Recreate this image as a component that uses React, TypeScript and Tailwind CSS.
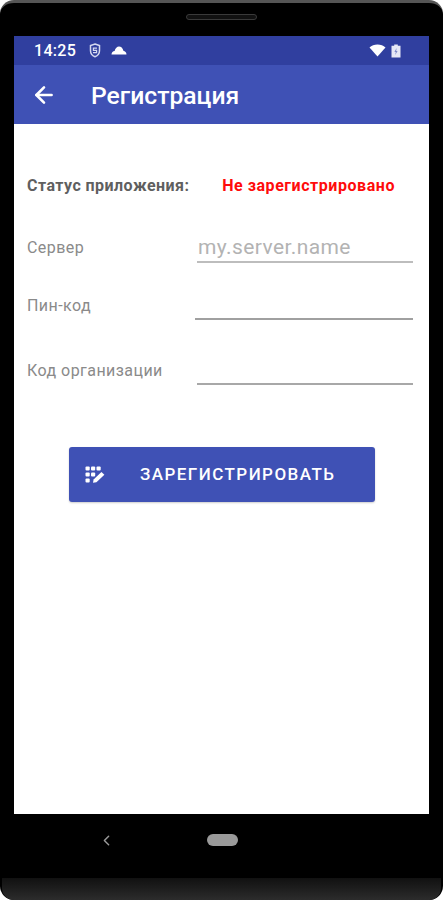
import { ArrowLeft, ChevronLeft } from 'lucide-react'

function ShieldIcon() {
  return (
    <svg width="12" height="15" viewBox="0 0 12 15" fill="none" className="ml-[13px]">
      <path d="M6 1 L10.5 2.6 V7.5 C10.5 10.5 8.4 12.9 6 13.8 C3.6 12.9 1.5 10.5 1.5 7.5 V2.6 Z" stroke="#d5d9f0" strokeWidth="1.5" />
      <path d="M8 5.2 H4.4 V7.3 H7.6 V9.6 H4" stroke="#d5d9f0" strokeWidth="1.2" />
    </svg>
  )
}

function CloudIcon() {
  return (
    <svg width="16" height="11" viewBox="0 0 16 11" className="ml-[10px]">
      <path d="M0.5 9.5 C0.5 7.5 2 6.2 3.6 6 C4.4 3.2 6 1.5 8 1.5 C10 1.5 11.8 3 12.4 5.8 C14 6 15.5 7.5 15.5 9.5 Z" fill="#ffffff" />
    </svg>
  )
}

function WifiIcon() {
  return (
    <svg width="17" height="13" viewBox="0 0 17 13">
      <path d="M0.5 3.4 C2.5 1.6 5.3 0.5 8.5 0.5 C11.7 0.5 14.5 1.6 16.5 3.4 L8.5 12.5 Z" fill="#ffffff" />
    </svg>
  )
}

function BatteryIcon() {
  return (
    <svg width="10" height="14" viewBox="0 0 10 14" className="ml-[5px]">
      <path d="M3.2 0.5 H6.8 V1.8 H9.5 V13.5 H0.5 V1.8 H3.2 Z" fill="#e6e8f6" />
      <path d="M5.6 4 L3.4 8 H4.8 L4.2 11 L6.6 7 H5.2 Z" fill="#7c88c8" />
    </svg>
  )
}

function DialpadEditIcon() {
  return (
    <svg width="20" height="18" viewBox="0 0 20 18" fill="#ffffff">
      <rect x="0.5" y="0.5" width="4.2" height="4" rx="1" />
      <rect x="6" y="0.5" width="4.2" height="4" rx="1" />
      <rect x="11.5" y="0.5" width="4.2" height="4" rx="1" />
      <rect x="0.5" y="6.5" width="4.2" height="4" rx="1" />
      <rect x="6" y="6.5" width="4.2" height="4" rx="1" />
      <rect x="0.5" y="12.5" width="4.2" height="4" rx="1" />
      <path d="M8 16.8 L8.6 13.6 L16.4 6 L19.4 8.8 L11.4 16.2 Z" />
    </svg>
  )
}

function FieldRow({ label, className, labelClass, inputClass, placeholder }: { label: string; className: string; labelClass: string; inputClass: string; placeholder?: string }) {
  return (
    <div className={`flex items-end justify-between ${className}`}>
      <span className={`text-[16px] leading-[20px] tracking-[0.45px] text-[#8a8a8a] ${labelClass}`}>{label}</span>
      <div className={`h-[30px] text-[21px] leading-[28px] tracking-[0.4px] text-[#b3b3b3] ${inputClass}`}>
        {placeholder}
      </div>
    </div>
  )
}

export default function App() {
  return (
    <div className="w-[443px] h-[900px] bg-white overflow-hidden font-['Roboto',sans-serif]">
      <div className="w-full h-full flex flex-col bg-black rounded-[14px] border-t-[3px] border-[#555555] relative">
        {/* Speaker */}
        <div className="h-[33px] flex justify-center pt-[11px] shrink-0">
          <div className="w-[71px] h-[6px] rounded-full border border-[#3a3a3a] bg-[#111111]" />
        </div>

        {/* Screen */}
        <div className="mx-[14px] h-[778px] shrink-0 flex flex-col bg-white">
          <div className="h-[29px] bg-[#303f9f] flex items-center pl-[20px] pr-[28px] text-white">
            <span className="text-[16px] font-medium leading-none tracking-[0.3px]">14:25</span>
            <ShieldIcon />
            <CloudIcon />
            <div className="flex-1" />
            <WifiIcon />
            <BatteryIcon />
          </div>
          <div className="h-[59px] bg-[#3f51b5] flex items-center pl-[17px] text-white">
            <ArrowLeft size={26} strokeWidth={2.4} />
            <span className="ml-[34px] mt-[3px] text-[24.7px] font-medium leading-none">Регистрация</span>
          </div>

          <div className="flex-1 px-[13px] pr-[16px]">
            <div className="mt-[52px] flex justify-between pr-[18px] text-[16px] font-bold leading-[20px]">
              <span className="text-[#5f5f5f] tracking-[0.45px]">Статус приложения:</span>
              <span className="text-[#ff0b0b] tracking-[0.55px]">Не зарегистрировано</span>
            </div>
            <FieldRow
              label="Сервер"
              className="mt-[37px]"
              labelClass="mb-[5px]"
              inputClass="w-[216px] border-b-2 border-[#bdbdbd] pl-[1px]"
              placeholder="my.server.name"
            />
            <FieldRow
              label="Пин-код"
              className="mt-[27px]"
              labelClass="mb-[4px]"
              inputClass="w-[218px] border-b-2 border-[#a0a0a0]"
            />
            <FieldRow
              label="Код организации"
              className="mt-[35px]"
              labelClass="mb-[4px]"
              inputClass="w-[216px] border-b-2 border-[#a8a8a8]"
            />

            <button className="mt-[62px] ml-[42px] w-[306px] h-[55px] flex items-center rounded-[3px] bg-[#3f51b5] pl-[16px] text-white shadow-[0_1px_2px_rgba(0,0,0,0.2)]">
              <DialpadEditIcon />
              <span className="ml-[35px] text-[17px] font-medium tracking-[1.45px]">ЗАРЕГИСТРИРОВАТЬ</span>
            </button>
          </div>
        </div>

        {/* Nav bar */}
        <div className="h-[64px] shrink-0 flex items-center pb-[12px]">
          <ChevronLeft size={17} strokeWidth={2} className="ml-[98px] text-[#9a9a9a]" />
          <div className="ml-[92px] w-[31px] h-[12px] rounded-full bg-[#9a9a9a]" />
        </div>

        {/* Bottom edge */}
        <div className="flex-1 mx-[2px] rounded-b-[12px] bg-gradient-to-b from-[#111111] to-[#2c2c2c]" />
      </div>
    </div>
  )
}
